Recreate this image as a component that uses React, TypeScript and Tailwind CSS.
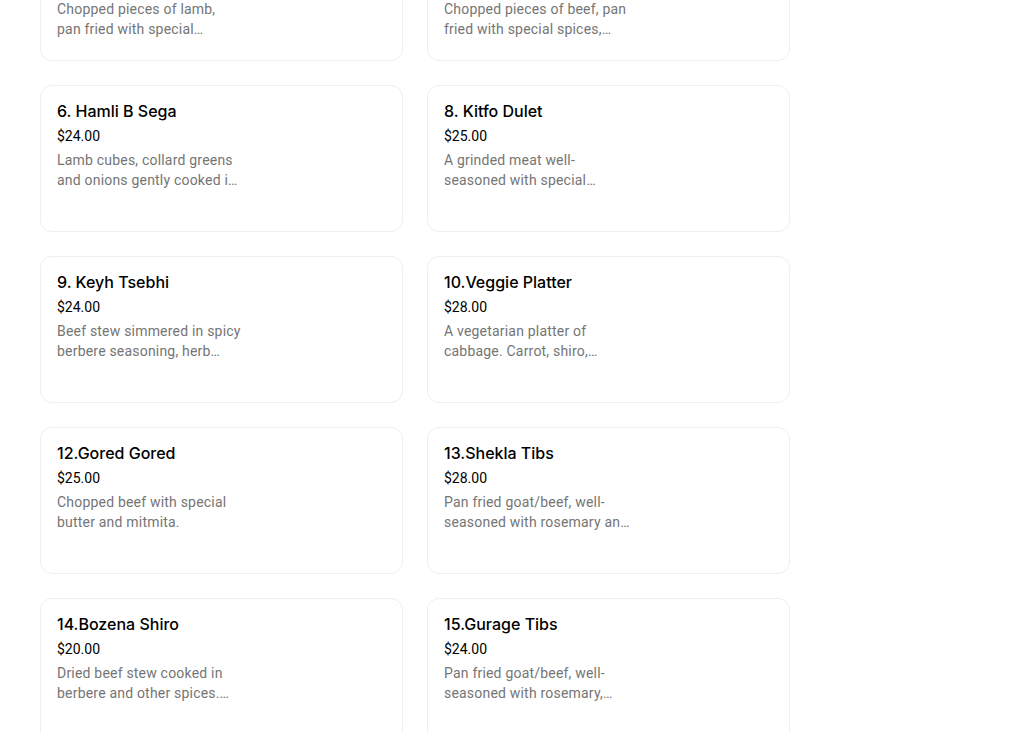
import React from 'react';

type Item = { name: string; price: string; desc: string; wide?: boolean };

const ITEMS: Item[] = [
  { name: '5. Yebeg Tibs', price: '$24.00', desc: 'Chopped pieces of lamb, pan fried with special…' },
  { name: '7. Bozena Tibs', price: '$24.00', desc: 'Chopped pieces of beef, pan fried with special spices,…' },
  { name: '6. Hamli B Sega', price: '$24.00', desc: 'Lamb cubes, collard greens and onions gently cooked i…' },
  { name: '8. Kitfo Dulet', price: '$25.00', desc: 'A grinded meat well-seasoned with special…' },
  { name: '9. Keyh Tsebhi', price: '$24.00', desc: 'Beef stew simmered in spicy berbere seasoning, herb…' },
  { name: '10.Veggie Platter', price: '$28.00', desc: 'A vegetarian platter of cabbage. Carrot, shiro,…' },
  { name: '12.Gored Gored', price: '$25.00', desc: 'Chopped beef with special butter and mitmita.' },
  { name: '13.Shekla Tibs', price: '$28.00', desc: 'Pan fried goat/beef, well-seasoned with rosemary an…', wide: true },
  { name: '14.Bozena Shiro', price: '$20.00', desc: 'Dried beef stew cooked in berbere and other spices.…' },
  { name: '15.Gurage Tibs', price: '$24.00', desc: 'Pan fried goat/beef, well-seasoned with rosemary,…' },
];

function Card({ item, first }: { item: Item; first?: boolean }) {
  return (
    <div
      className={`rounded-xl border border-[#eeeeee] bg-white px-4 pt-[15px] ${first ? 'h-[127px]' : 'h-[147px]'}`}
    >
      <div className="mb-[5px] text-[16px] leading-5 font-medium text-black" style={{ fontFamily: 'Inter, sans-serif' }}>
        {item.name}
      </div>
      <div className="mb-1 text-[14px] leading-5 text-black">{item.price}</div>
      <div
        className={`line-clamp-2 text-[14px] leading-5 tracking-[0.2px] text-[#757575] ${item.wide ? 'w-[192px]' : 'w-[185px]'}`}
      >
        {item.desc}
      </div>
    </div>
  );
}

export default function App() {
  return (
    <div className="h-[732px] overflow-hidden bg-white" style={{ fontFamily: 'Roboto, "Noto Sans", sans-serif' }}>
      <div className="mt-[-66px] ml-10 grid w-[750px] grid-cols-2 gap-6">
        {ITEMS.map((item, i) => (
          <Card key={item.name} item={item} first={i < 2} />
        ))}
      </div>
    </div>
  );
}
